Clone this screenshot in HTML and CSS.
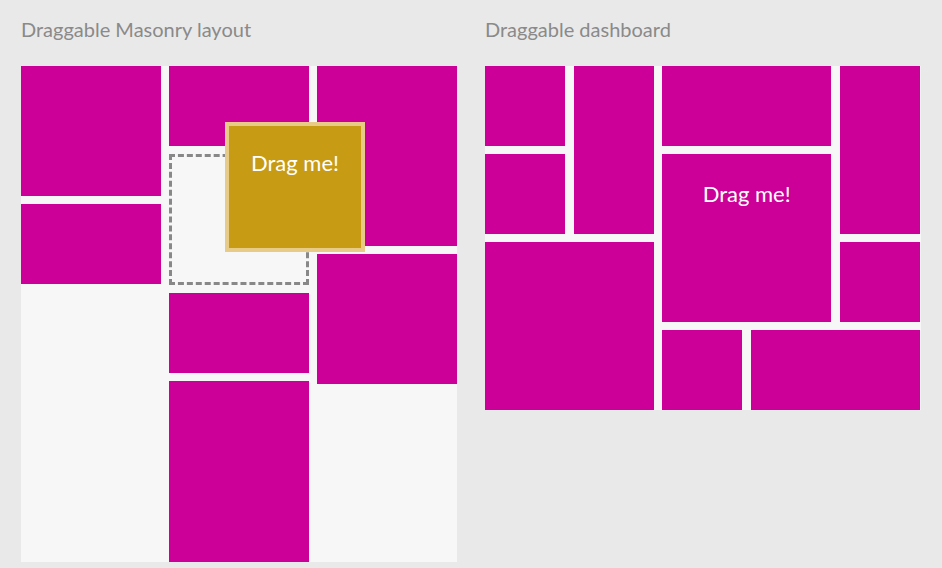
FILE: index.html
```html
<!DOCTYPE html>
<html lang="en">
<head>
    <meta charset="UTF-8">
    <meta name="viewport" content="width=device-width, initial-scale=1.0">
    <title>Draggable layouts</title>
    <link rel="stylesheet" href="styles.css">
</head>
<body>

<div class="page">
    <div class="demo">
        <h2 class="demo-title">Draggable Masonry layout</h2>
        <div class="masonry">
            <div class="masonry-col">
                <div class="tile h130"></div>
                <div class="tile h80"></div>
            </div>
            <div class="masonry-col">
                <div class="tile h80"></div>
                <div class="placeholder"></div>
                <div class="tile h80"></div>
                <div class="tile fill"></div>
            </div>
            <div class="masonry-col">
                <div class="tile h180"></div>
                <div class="tile h130"></div>
            </div>

            <div class="tile dragging">Drag me!</div>
        </div>
    </div>

    <div class="demo">
        <h2 class="demo-title">Draggable dashboard</h2>
        <div class="dashboard">
            <div class="tile" style="grid-column: 1; grid-row: 1;"></div>
            <div class="tile" style="grid-column: 1; grid-row: 2;"></div>
            <div class="tile" style="grid-column: 2; grid-row: 1 / 3;"></div>
            <div class="tile" style="grid-column: 1 / 3; grid-row: 3 / 5;"></div>
            <div class="tile" style="grid-column: 3 / 5; grid-row: 1;"></div>
            <div class="tile label" style="grid-column: 3 / 5; grid-row: 2 / 4;">Drag me!</div>
            <div class="tile" style="grid-column: 5; grid-row: 1 / 3;"></div>
            <div class="tile" style="grid-column: 5; grid-row: 3;"></div>
            <div class="tile" style="grid-column: 3; grid-row: 4;"></div>
            <div class="tile" style="grid-column: 4 / 6; grid-row: 4;"></div>
        </div>
    </div>
</div>

</body>
</html>
```

FILE: styles.css
```css
body {
    margin: 0;
    background-color: #e9e9e9;
    font-family: Lato, "Open Sans", sans-serif;
}
.page {
    display: flex;
    gap: 28px;
    padding: 0 21px;
}
.demo {
    width: 436px;
}
.demo-title {
    margin: 0 0 25px;
    padding-top: 17px;
    font-size: 20px;
    line-height: 24px;
    font-weight: normal;
    color: #8a8a8a;
}
.tile {
    background-color: #cc0099;
    color: #fff;
    font-size: 22px;
    line-height: 30px;
    text-align: center;
}
.masonry {
    position: relative;
    display: flex;
    gap: 8px;
    height: 496px;
    background-color: #f7f7f7;
}
.masonry-col {
    display: flex;
    flex-direction: column;
    gap: 8px;
    width: 140px;
}
.h80 {
    height: 80px;
}
.h130 {
    height: 130px;
}
.h180 {
    height: 180px;
}
.fill {
    flex: 1;
}
.placeholder {
    box-sizing: border-box;
    height: 131px;
    border: 3px dashed #888;
}
.dragging {
    position: absolute;
    left: 204px;
    top: 56px;
    box-sizing: border-box;
    width: 140px;
    height: 130px;
    padding-top: 22px;
    border: 4px solid #e7cb86;
    background-color: #c89b14;
}
.dashboard {
    display: grid;
    grid-template-columns: repeat(5, 80px);
    grid-template-rows: repeat(4, 80px);
    column-gap: 8.67px;
    row-gap: 8px;
    width: 436px;
    background-color: #f7f7f7;
}
.label {
    padding-top: 25px;
}
```
